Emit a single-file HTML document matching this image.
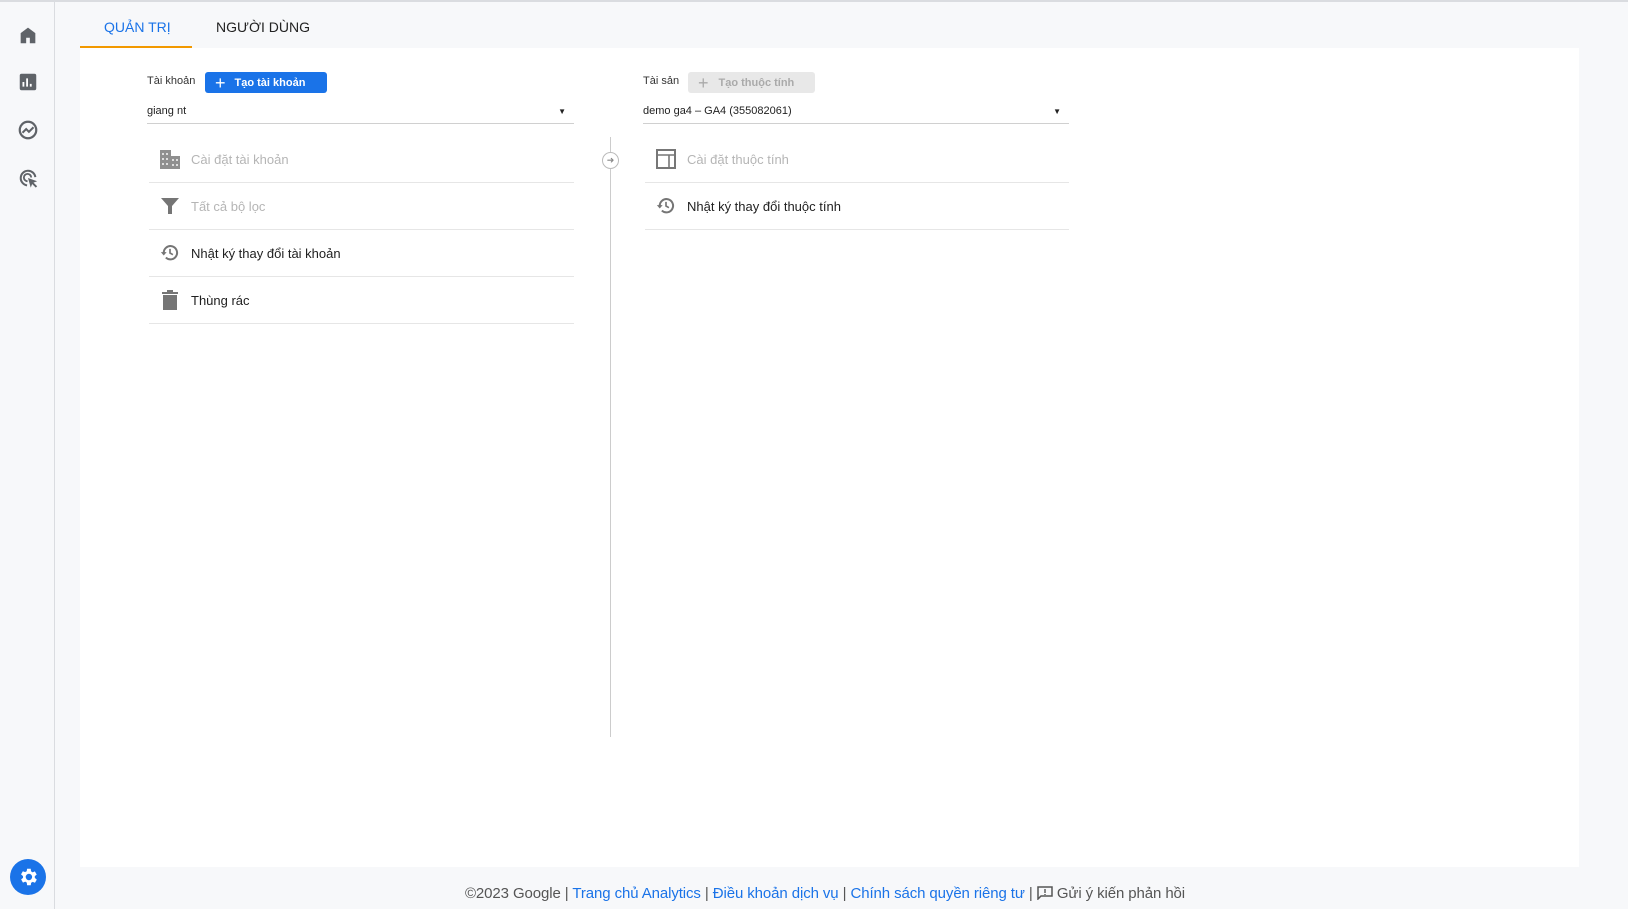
<!DOCTYPE html>
<html><head><meta charset="utf-8"><style>
*{margin:0;padding:0;box-sizing:border-box}
body{width:1628px;height:909px;background:#f7f8fa;font-family:"Liberation Sans",Arial,sans-serif;position:relative;overflow:hidden;color:#212121}
.abs{position:absolute}
#top{left:0;top:0;width:1628px;height:2px;background:#dadce0}
#side{left:0;top:2px;width:55px;height:907px;border-right:1px solid #dadce0;background:#f7f8fa}
#panel{left:80px;top:48px;width:1499px;height:819px;background:#fff}
.tab{font-size:14px;top:19px}
.row{position:absolute;height:47px;border-bottom:1px solid #e6e6e6;font-size:13px;display:flex;align-items:center}
.row .ic{width:42px;display:flex;justify-content:center}
.dis{color:#b5b5b5}
.lbl{font-size:11px;color:#333}
.dd{font-size:11px;color:#222;border-bottom:1px solid #d0d0d0;height:24px;padding-top:5px}
.foot{top:885px;left:0;width:1650px;text-align:center;font-size:15px;color:#555;letter-spacing:-0.1px}
.foot a{color:#1a73e8;text-decoration:none}
</style></head><body>
<div class="abs" id="top"></div>
<div class="abs" id="side">
<svg class="abs" style="left:17px;top:22px" width="22" height="22" viewBox="0 0 24 24"><path d="M4 21V10l8-6 8 6v11h-6v-6h-4v6z" fill="#5f6368"/></svg>
<svg class="abs" style="left:17px;top:69px" width="22" height="22" viewBox="0 0 24 24"><rect x="3" y="3" width="18" height="18" rx="2" fill="#5f6368"/><path d="M7 17V12M11 17V8M15 17v-3" stroke="#fff" stroke-width="2"/></svg>
<svg class="abs" style="left:17px;top:117px" width="22" height="22" viewBox="0 0 24 24"><circle cx="12" cy="12" r="9" fill="none" stroke="#5f6368" stroke-width="2.4"/><path d="M6 15l4-4 3 3 5-5" fill="none" stroke="#5f6368" stroke-width="2.2"/></svg>
<svg class="abs" style="left:17px;top:165px" width="22" height="22" viewBox="0 0 24 24"><path d="M20 11A8 8 0 1 0 11 20" fill="none" stroke="#5f6368" stroke-width="2.2"/><path d="M15.5 11.5A4 4 0 1 0 11.5 15.5" fill="none" stroke="#5f6368" stroke-width="2"/><path d="M12 12l10 3.5-4 1.5 4 4-1.5 1.5-4-4-1.5 4z" fill="#5f6368"/></svg>
<div class="abs" style="left:10px;top:857px;width:36px;height:36px;border-radius:50%;background:#1a73e8"></div>
<svg class="abs" style="left:17px;top:864px" width="22" height="22" viewBox="0 0 24 24"><path fill="#fff" d="M19.4 13a7.5 7.5 0 0 0 0-2l2.1-1.6-2-3.5-2.5 1a7 7 0 0 0-1.7-1L15 3h-4l-.4 2.7a7 7 0 0 0-1.7 1l-2.5-1-2 3.5L6.6 11a7.5 7.5 0 0 0 0 2l-2.1 1.6 2 3.5 2.5-1a7 7 0 0 0 1.7 1L11 21h4l.4-2.7a7 7 0 0 0 1.7-1l2.5 1 2-3.5zM13 15.5A3.5 3.5 0 1 1 13 8.5a3.5 3.5 0 0 1 0 7z"/></svg>
</div>
<div class="abs tab" style="left:104px;color:#1a73e8">QUẢN TRỊ</div>
<div class="abs tab" style="left:216px;color:#222">NGƯỜI DÙNG</div>
<div class="abs" style="left:80px;top:46px;width:112px;height:2px;background:#f29900"></div>
<div class="abs" id="panel"></div>

<div class="abs lbl" style="left:147px;top:75px">Tài khoản</div>
<div class="abs" style="left:205px;top:72px;width:122px;height:21px;background:#1a73e8;border-radius:3px;color:#fff;font-size:11px;font-weight:bold;display:flex;align-items:center"><span style="font-size:18px;font-weight:normal;margin:0 9px 0 10px;line-height:1">+</span>Tạo tài khoản</div>
<div class="abs dd" style="left:147px;top:100px;width:427px">giang nt<span style="position:absolute;right:8px;top:7px;font-size:8px">▼</span></div>

<div class="row" style="left:149px;top:136px;width:425px"><span class="ic"><svg width="22" height="20" viewBox="0 0 22 20"><path d="M1 1h11v6h9v13H1z" fill="#8f8f8f"/><g fill="#ddd"><rect x="3" y="4" width="2" height="2"/><rect x="7" y="4" width="2" height="2"/><rect x="3" y="9" width="2" height="2"/><rect x="7" y="9" width="2" height="2"/><rect x="3" y="14" width="2" height="2"/><rect x="7" y="14" width="2" height="2"/><rect x="13" y="10" width="2" height="2"/><rect x="17" y="10" width="2" height="2"/><rect x="13" y="15" width="2" height="2"/><rect x="17" y="15" width="2" height="2"/></g></svg></span><span class="dis">Cài đặt tài khoản</span></div>
<div class="row" style="left:149px;top:183px;width:425px"><span class="ic"><svg width="18" height="18" viewBox="0 0 18 18"><path d="M0 1h18l-7 8v8H7V9z" fill="#757575"/></svg></span><span class="dis">Tất cả bộ lọc</span></div>
<div class="row" style="left:149px;top:230px;width:425px"><span class="ic"><svg width="20" height="20" viewBox="0 0 24 24"><path d="M4.5 12A8 8 0 1 1 7 17.5" fill="none" stroke="#757575" stroke-width="2.4"/><path d="M1 11l3.5 4 3.5-4z" fill="#757575"/><path d="M12 7v5l3.5 2" fill="none" stroke="#757575" stroke-width="2"/></svg></span><span>Nhật ký thay đổi tài khoản</span></div>
<div class="row" style="left:149px;top:277px;width:425px"><span class="ic"><svg width="18" height="20" viewBox="0 0 18 20"><rect x="1" y="2" width="16" height="2" fill="#757575"/><rect x="6" y="0" width="6" height="2" fill="#757575"/><rect x="2" y="5" width="14" height="15" fill="#757575"/></svg></span><span>Thùng rác</span></div>

<div class="abs" style="left:610px;top:137px;width:1px;height:600px;background:#ccc"></div>
<div class="abs" style="left:602px;top:152px;width:17px;height:17px;border-radius:50%;border:1px solid #bbb;background:#fff;font-size:9px;color:#888;text-align:center;line-height:15px">➜</div>

<div class="abs lbl" style="left:643px;top:75px">Tài sản</div>
<div class="abs" style="left:688px;top:72px;width:127px;height:21px;background:#e8e8e8;border-radius:3px;color:#aaa;font-size:11px;font-weight:bold;display:flex;align-items:center"><span style="font-size:18px;font-weight:normal;margin:0 10px 0 10px;line-height:1">+</span>Tạo thuộc tính</div>
<div class="abs dd" style="left:643px;top:100px;width:426px">demo ga4 – GA4 (355082061)<span style="position:absolute;right:8px;top:7px;font-size:8px">▼</span></div>
<div class="row" style="left:645px;top:136px;width:424px"><span class="ic"><svg width="20" height="20" viewBox="0 0 20 20"><rect x="1" y="1" width="18" height="18" fill="none" stroke="#777" stroke-width="2"/><path d="M1 6h18M13 6v13" stroke="#777" stroke-width="1.6"/></svg></span><span class="dis">Cài đặt thuộc tính</span></div>
<div class="row" style="left:645px;top:183px;width:424px"><span class="ic"><svg width="20" height="20" viewBox="0 0 24 24"><path d="M4.5 12A8 8 0 1 1 7 17.5" fill="none" stroke="#757575" stroke-width="2.4"/><path d="M1 11l3.5 4 3.5-4z" fill="#757575"/><path d="M12 7v5l3.5 2" fill="none" stroke="#757575" stroke-width="2"/></svg></span><span>Nhật ký thay đổi thuộc tính</span></div>

<div class="abs foot">©2023 Google | <a>Trang chủ Analytics</a> | <a>Điều khoản dịch vụ</a> | <a>Chính sách quyền riêng tư</a> | <svg width="16" height="14" viewBox="0 0 16 14" style="vertical-align:-2px"><path d="M1 1h14v9H4l-3 3z" fill="none" stroke="#555" stroke-width="1.5"/><path d="M8 3v4M8 8v1" stroke="#555" stroke-width="1.4"/></svg> Gửi ý kiến phản hồi</div>
</body></html>
